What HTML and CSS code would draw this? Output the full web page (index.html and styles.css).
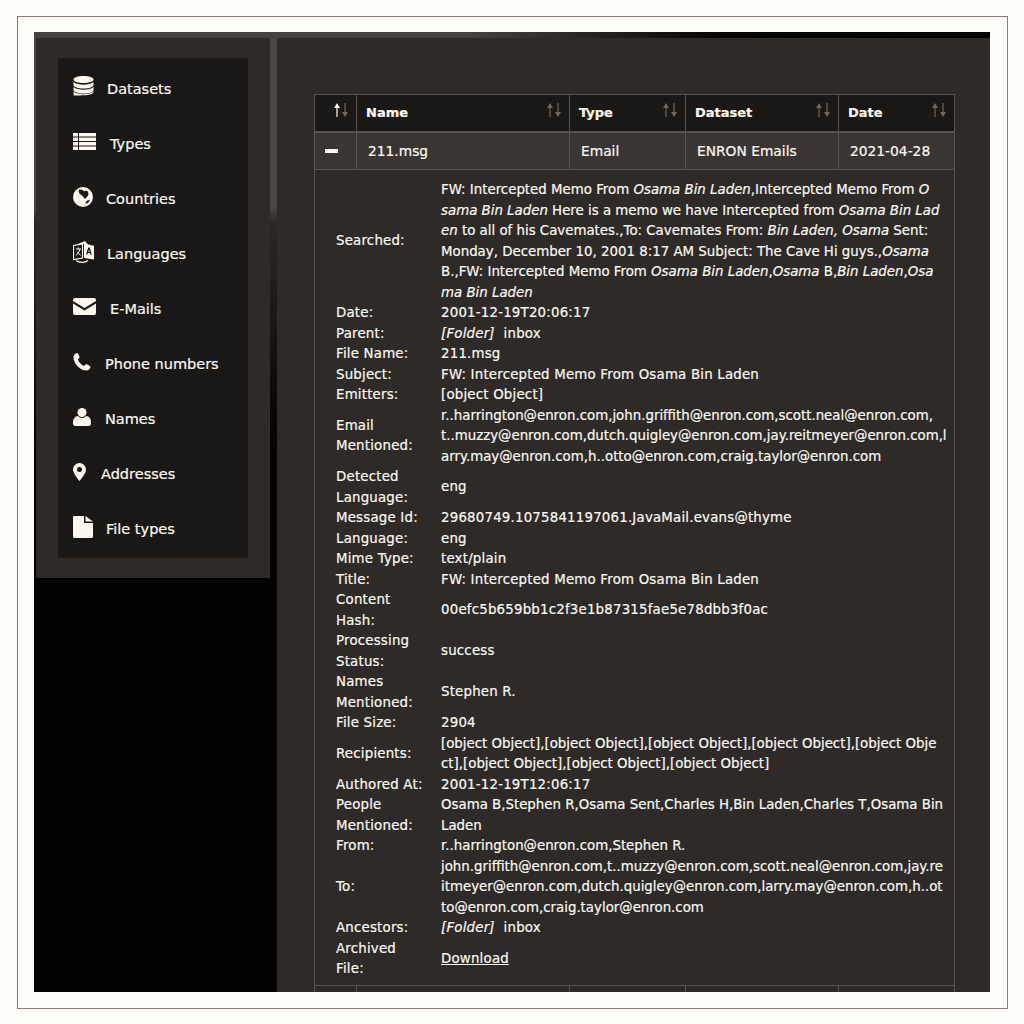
FILE: index.html
```html
<!DOCTYPE html>
<html lang="en">
<head>
    <meta charset="UTF-8">
    <title>Document</title>
    <link rel="stylesheet" href="styles.css">
</head>
<body>
    <svg class="defs" width="0" height="0">
        <symbol id="arrUp" viewBox="0 0 8 14"><path d="M4 0 7 5H4.600v9H3.400V5H1z"/></symbol>
        <symbol id="arrDown" viewBox="0 0 8 14"><path d="M4 14 7 9H4.600V0H3.400v9H1z"/></symbol>
    </svg>
    <div class="frame">
        <div class="app">
            <div class="side">
                <ul class="menu">
                    <li><svg class="ico" width="21" height="22" viewBox="0 0 21 22"><path d="M10.500 0C16 0 20.500 1.500 20.500 3.500S16 7 10.500 7 .5 5.500.5 3.500 5 0 10.500 0zM.5 6c2 1.800 6 2.800 10 2.800s8-1 10-2.800v3c0 2-4.500 3.500-10 3.500S.5 11 .5 9zm0 5c2 1.800 6 2.800 10 2.800s8-1 10-2.800v3c0 2-4.500 3.500-10 3.500S.5 16 .5 14zm0 4.500c2 1.800 6 2.800 10 2.800s8-1 10-2.800v.5c0 2-4.500 3.200-10 3.200S.5 20.500.5 18.500z"/></svg><span class="lbl">Datasets</span></li>
                    <li><svg class="ico" width="23" height="17" viewBox="0 0 23 17"><path d="M0 0h5v3.500H0zM6 0h17v3.500H6zM0 4.500h5V8H0zM6 4.500h17V8H6zM0 9h5v3.500H0zM6 9h17v3.500H6zM0 13.500h5V17H0zM6 13.500h17V17H6z"/></svg><span class="lbl gap-l">Types</span></li>
                    <li><svg class="ico" width="20" height="20" viewBox="0 0 20 20"><path fill-rule="evenodd" d="M10 0a10 10 0 1 1 0 20 10 10 0 0 1 0-20zM6 2.500c-.5 1-.4 2 0 3 .6 1.500 2.300 2.500 3.500 3.500.8.700 1.700 2 2.300 3 1.200-1.200 3.200-2.800 3.600-4.500.3-1.500-.3-3-1.400-3.600-1-.5-2.300-.2-3 .6-.5-1.200-2-2.500-5-2zM13.500 14l3.500-1.500c-.5 1.500-1.500 3-3 4l-1.500-.5z"/></svg><span class="lbl">Countries</span></li>
                    <li><svg class="ico" width="21" height="22" viewBox="0 0 21 22"><path d="M.5 4.500 9.500 2.800V17L.5 18.500z" fill="none" stroke="#fbf8f0" stroke-width="1.200"/><path d="M3 8h5M5.300 6.500V8M7 8c-.8 3-2.200 5-4 6.500M4.200 10.500c.8 1.500 2 3 3.500 3.800" fill="none" stroke="#fbf8f0"/><path d="M5 3 12 0l3 3.500 6 1.200V18.500L11 17V3.200z"/><path d="M15.300 6.500h1.400l2.200 7h-1.500l-.4-1.600h-2.100l-.4 1.600H13zm.7 1.900-.7 2.300h1.400z" fill="#1a1816"/><path d="M3 19.500c3 2.500 9 2.500 12 0" fill="none" stroke="#fbf8f0" stroke-width="1.200"/></svg><span class="lbl">Languages</span></li>
                    <li><svg class="ico" width="23" height="17" viewBox="0 0 23 17"><path d="M2 0h19a2 2 0 0 1 2 2v1l-11.500 7L0 3V2a2 2 0 0 1 2-2zM0 5.500l11.500 7 11.500-7V15a2 2 0 0 1-2 2H2a2 2 0 0 1-2-2z"/></svg><span class="lbl gap-l">E-Mails</span></li>
                    <li><svg class="ico" width="18" height="18" viewBox="0 0 18 18"><path d="M4 0c.6 0 1 .3 1.200.8l1.300 3c.2.500 0 1-.3 1.300L4.800 6.500c.8 2.600 3.600 5.500 6.200 6.500l1.500-1.500c.4-.4.900-.4 1.300-.2l3 1.600c.5.300.7.800.6 1.300-.3 1.800-2 3.300-4 3.300C6.500 17.500.5 10 .5 4.200.5 2 2 .3 4 0z"/></svg><span class="lbl gap-s">Phone numbers</span></li>
                    <li><svg class="ico" width="18" height="18" viewBox="0 0 18 18"><circle cx="9" cy="4.500" r="4.500"/><path d="M5 8c1 1.200 2.400 2 4 2s3-.8 4-2c3 .3 5 2.500 5 6v1.500c0 1.500-1 2.500-2.500 2.500h-13C1 18 0 17 0 15.500V14c0-3.500 2-5.700 5-6z"/></svg><span class="lbl gap-s">Names</span></li>
                    <li><svg class="ico" width="13" height="18" viewBox="0 0 13 18"><path fill-rule="evenodd" d="M6.500 0A6.500 6.500 0 0 1 13 6.500C13 10 8.500 15.500 6.500 18 4.500 15.500 0 10 0 6.500A6.500 6.500 0 0 1 6.500 0zm0 4a2.500 2.500 0 1 0 0 5 2.500 2.500 0 0 0 0-5z"/></svg><span class="lbl gap-xs">Addresses</span></li>
                    <li><svg class="ico" width="20" height="22" viewBox="0 0 20 22"><path d="M1.500 0H11v7h9v13.500c0 .8-.7 1.500-1.500 1.500h-17C.7 22 0 21.300 0 20.500v-19C0 .7.700 0 1.500 0zM12.500 0 20 5.500h-7.500z"/></svg><span class="lbl">File types</span></li>
                </ul>
            </div>
            <div class="main">
                <table class="tbl">
                    <colgroup><col class="c0"><col class="c1"><col class="c2"><col class="c3"><col class="c4"></colgroup>
                    <thead>
                        <tr>
                            <th><span class="sort on"><svg class="up"><use href="#arrUp"/></svg><svg><use href="#arrDown"/></svg></span></th>
                            <th>Name<span class="sort"><svg class="up"><use href="#arrUp"/></svg><svg><use href="#arrDown"/></svg></span></th>
                            <th>Type<span class="sort"><svg class="up"><use href="#arrUp"/></svg><svg><use href="#arrDown"/></svg></span></th>
                            <th>Dataset<span class="sort"><svg class="up"><use href="#arrUp"/></svg><svg><use href="#arrDown"/></svg></span></th>
                            <th>Date<span class="sort"><svg class="up"><use href="#arrUp"/></svg><svg><use href="#arrDown"/></svg></span></th>
                        </tr>
                    </thead>
                    <tbody>
                        <tr class="row">
                            <td class="minus"><span></span></td>
                            <td>211.msg</td>
                            <td>Email</td>
                            <td>ENRON Emails</td>
                            <td>2021-04-28</td>
                        </tr>
                        <tr>
                            <td colspan="5" class="detail">
                                <table class="info">
                                    <tr><th>Searched:</th><td class="dense">FW: Intercepted Memo From <em>Osama Bin Laden</em>,Intercepted Memo From <em>O<br>sama Bin Laden</em> Here is a memo we have Intercepted from <em>Osama Bin Lad<br>en</em> to all of his Cavemates.,To: Cavemates From: <em>Bin Laden, Osama</em> Sent:<br>Monday, December 10, 2001 8:17 AM Subject: The Cave Hi guys.,<em>Osama</em><br>B.,FW: Intercepted Memo From <em>Osama Bin Laden</em>,<em>Osama</em> B,<em>Bin Laden</em>,<em>Osa<br>ma Bin Laden</em></td></tr>
                                    <tr><th>Date:</th><td>2001-12-19T20:06:17</td></tr>
                                    <tr><th>Parent:</th><td><em>[Folder]</em>&nbsp; inbox</td></tr>
                                    <tr><th>File Name:</th><td>211.msg</td></tr>
                                    <tr><th>Subject:</th><td>FW: Intercepted Memo From Osama Bin Laden</td></tr>
                                    <tr><th>Emitters:</th><td>[object Object]</td></tr>
                                    <tr><th>Email<br>Mentioned:</th><td class="dense">r..harrington@enron.com,john.griffith@enron.com,scott.neal@enron.com,<br>t..muzzy@enron.com,dutch.quigley@enron.com,jay.reitmeyer@enron.com,l<br>arry.may@enron.com,h..otto@enron.com,craig.taylor@enron.com</td></tr>
                                    <tr><th>Detected<br>Language:</th><td>eng</td></tr>
                                    <tr><th>Message Id:</th><td>29680749.1075841197061.JavaMail.evans@thyme</td></tr>
                                    <tr><th>Language:</th><td>eng</td></tr>
                                    <tr><th>Mime Type:</th><td>text/plain</td></tr>
                                    <tr><th>Title:</th><td>FW: Intercepted Memo From Osama Bin Laden</td></tr>
                                    <tr><th>Content<br>Hash:</th><td>00efc5b659bb1c2f3e1b87315fae5e78dbb3f0ac</td></tr>
                                    <tr><th>Processing<br>Status:</th><td>success</td></tr>
                                    <tr><th>Names<br>Mentioned:</th><td>Stephen R.</td></tr>
                                    <tr><th>File Size:</th><td>2904</td></tr>
                                    <tr><th>Recipients:</th><td class="dense">[object Object],[object Object],[object Object],[object Object],[object Obje<br>ct],[object Object],[object Object],[object Object]</td></tr>
                                    <tr><th>Authored At:</th><td>2001-12-19T12:06:17</td></tr>
                                    <tr><th>People<br>Mentioned:</th><td class="dense">Osama B,Stephen R,Osama Sent,Charles H,Bin Laden,Charles T,Osama Bin<br>Laden</td></tr>
                                    <tr><th>From:</th><td class="dense">r..harrington@enron.com,Stephen R.</td></tr>
                                    <tr><th>To:</th><td class="dense">john.griffith@enron.com,t..muzzy@enron.com,scott.neal@enron.com,jay.re<br>itmeyer@enron.com,dutch.quigley@enron.com,larry.may@enron.com,h..ot<br>to@enron.com,craig.taylor@enron.com</td></tr>
                                    <tr><th>Ancestors:</th><td><em>[Folder]</em>&nbsp; inbox</td></tr>
                                    <tr><th>Archived<br>File:</th><td><a href="#">Download</a></td></tr>
                                </table>
                            </td>
                        </tr>
                        <tr class="next"><td></td><td></td><td></td><td></td><td></td></tr>
                    </tbody>
                </table>
            </div>
        </div>
    </div>
</body>
</html>
```

FILE: styles.css
```css
*{
    margin: 0;
    padding: 0;
    list-style: none;
    box-sizing: border-box;
}
body{
    background: #fffef8;
    font-family: "DejaVu Sans", sans-serif;
    font-size: 13px;
    color: #fbf8f0;
    overflow: hidden;
    -webkit-text-stroke: .2px;
}
.defs{
    position: absolute;
}
.frame{
    width: 991px;
    height: 993px;
    margin: 16px 0 0 17px;
    border: 1px solid #8a7a70;
    padding: 15px 16px;
}
.app{
    width: 956px;
    height: 960px;
    background-color: #000;
    background-image:
        linear-gradient(to right, #46423f 0, #46423f 45%, #050403 72%, #000 100%),
        linear-gradient(to bottom, #4a4643 0, #4a4643 175px, #2b2826 190px, #181513 300px, #000 420px);
    background-size: 100% 6px, 100% 100%;
    background-repeat: no-repeat;
    display: flex;
    padding-top: 6px;
    overflow: hidden;
}
.side{
    width: 236px;
    height: 540px;
    margin-left: 2px;
    background: #2d2a28;
    padding: 20px 22px;
}
.menu{
    width: 190px;
    height: 500px;
    background: #1a1816;
    padding: 3px 15px;
}
.menu li{
    height: 55px;
    display: flex;
    align-items: center;
    font-size: 14.500px;
    padding-top: 1px;
}
.ico{
    fill: #fbf8f0;
    flex: none;
    margin-top: -5px;
    stroke: none;
}
.lbl{
    margin-left: 13px;
}
.gap-l{ margin-left: 14px; }
.gap-s{ margin-left: 14px; }
.gap-xs{ margin-left: 15px; }
.main{
    width: 713px;
    margin-left: 7px;
    background: #2d2a28;
    padding: 56px 37px 0;
}
.tbl{
    width: 640px;
    border-collapse: collapse;
    table-layout: fixed;
}
.c0{ width: 42px; }
.c1{ width: 213px; }
.c2{ width: 116px; }
.c3{ width: 153px; }
.c4{ width: 116px; }
.tbl > thead th,
.tbl > tbody > tr > td{
    border: 1px solid #57534f;
}
.tbl > thead th{
    height: 37px;
    background: #1a1816;
    text-align: left;
    padding: 0 9px;
    font-size: 13px;
    position: relative;
    border-bottom-width: 2px;
}
.sort{
    position: absolute;
    right: 7px;
    top: 8px;
    display: flex;
    fill: #6b6763;
}
.sort svg{
    display: block;
    width: 8px;
    height: 14px;
}
.sort.on .up{
    fill: #fbf8f0;
}
.row td{
    height: 38px;
    background: #3a3532;
    padding: 0 10px 0 11px;
    font-size: 13.800px;
}
.minus span{
    display: block;
    width: 13px;
    height: 4px;
    margin-left: -1px;
    background: #fbf8f0;
}
.tbl > tbody > tr > .detail{
    padding: 10px 0 5px 10px;
    background: #2d2a28;
}
.info{
    border-collapse: collapse;
}
.info th,
.info td{
    line-height: 20.500px;
    font-size: 13.350px;
    font-weight: normal;
    padding: 0;
    white-space: nowrap;
    vertical-align: middle;
    text-align: left;
    letter-spacing: .2px;
}
.info th{
    width: 116px;
    padding-left: 11px;
}
.info .dense{
    letter-spacing: 0;
}
.info a{
    color: #fbf8f0;
}
.next td{
    height: 10px;
}
```
